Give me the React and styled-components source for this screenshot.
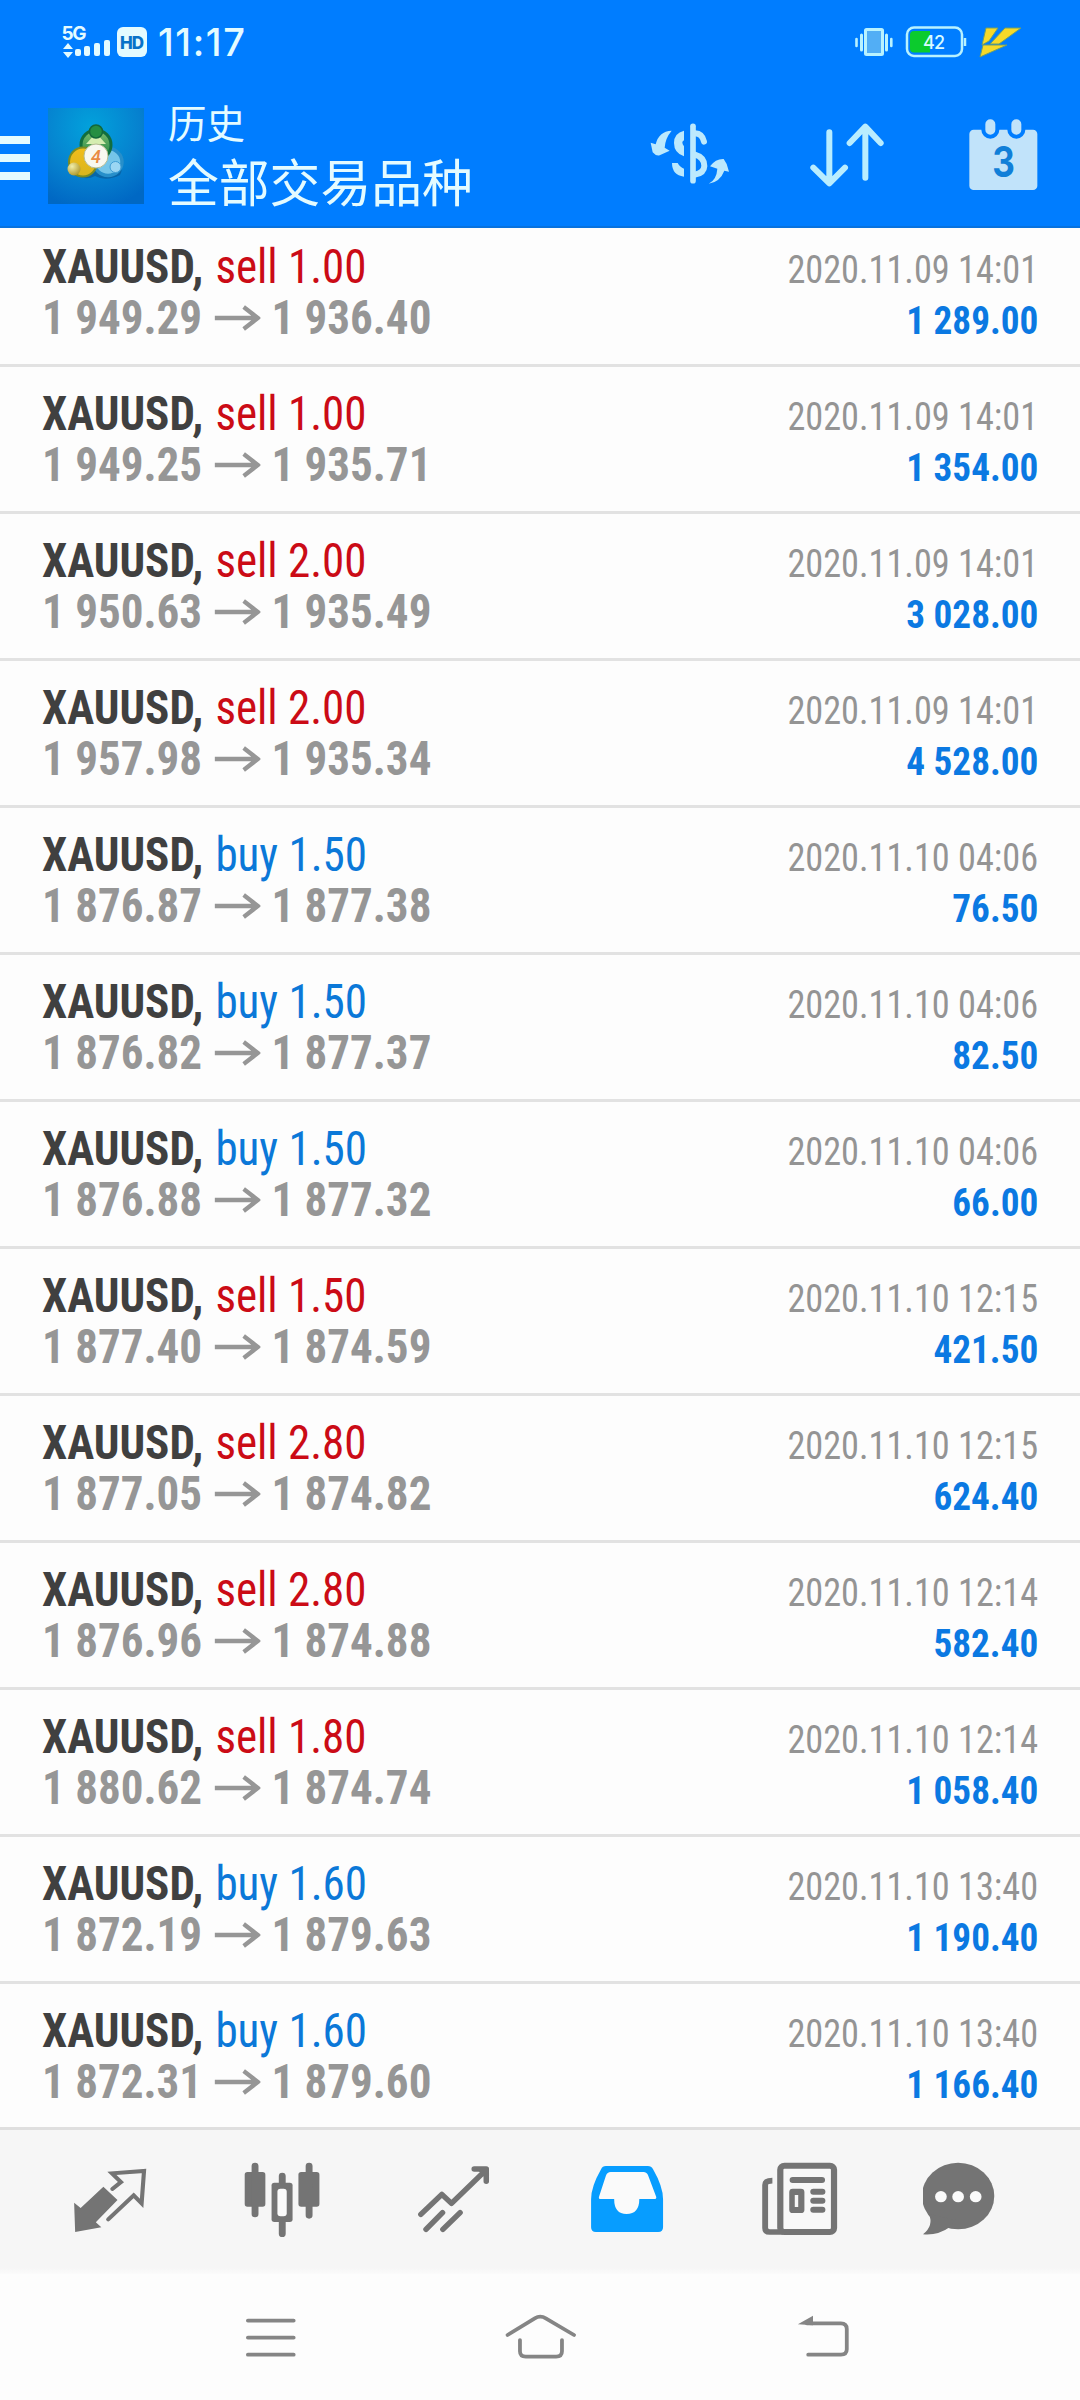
import React from 'react';
import styled, { createGlobalStyle } from 'styled-components';

const Global = createGlobalStyle`
  * { box-sizing: border-box; }
  body { margin: 0; background: #fdfdfd; }
`;

const condensed = '"Roboto Condensed", Roboto, "Liberation Sans", sans-serif';
const cjk = '"Noto Sans CJK SC", sans-serif';

const Screen = styled.div`
  width: 1080px;
  height: 2400px;
  display: flex;
  flex-direction: column;
  overflow: hidden;
  background: #fdfdfd;
`;

const Header = styled.header`
  height: 228px;
  flex: none;
  background: #007dff;
  border-bottom: 2px solid #0872de;
  color: #e4fbff;
`;

const StatusBar = styled.div`
  height: 84px;
  display: flex;
  align-items: center;
  justify-content: space-between;
  padding: 0 58px 0 60px;
`;

const StatusGroup = styled.div`
  display: flex;
  align-items: center;
`;

const Clock = styled.span`
  margin-left: 8px;
  font: 500 38px/86px Inter, sans-serif;
  letter-spacing: 1.6px;
`;

const AppBar = styled.div`
  height: 142px;
  display: flex;
  align-items: flex-start;
`;

const MenuButton = styled.div`
  width: 30px;
  margin: 52px 18px 0 0;
  display: flex;
  flex-direction: column;
  gap: 10px;
`;

const MenuLine = styled.span`
  height: 8px;
  background: #e4fbff;
`;

const Titles = styled.div`
  width: 480px;
  margin: 11px 0 0 24px;
  font-family: ${cjk};
  font-weight: 400;
`;

const Subtitle = styled.div`
  font-size: 38.5px;
  line-height: 52px;
`;

const Title = styled.div`
  font-size: 50.8px;
  line-height: 66px;
`;

const List = styled.main`
  height: 1899px;
  flex: none;
  overflow: hidden;
`;

const Rows = styled.div`
  margin-top: -8px;
`;

const Row = styled.div`
  height: 147px;
  display: flex;
  justify-content: space-between;
  padding: 21px 42px 0 42px;
  border-bottom: 3px solid #e2e2e2;
  font-family: ${condensed};
  white-space: nowrap;
`;

const Left = styled.div`
  display: flex;
  flex-direction: column;
  transform: scaleX(0.938);
  transform-origin: left;
`;

const Line = styled.div`
  height: 51px;
  line-height: 51px;
  font-size: 48px;
  display: flex;
  align-items: center;
`;

const Symbol = styled.b`
  color: #404040;
  margin-right: 13px;
`;

const Order = styled.span`
  color: ${(p) => (p.$side === 'sell' ? '#cb0b16' : '#0b78d8')};
`;

const Price = styled.b`
  color: #969696;
`;

const Right = styled.div`
  padding-top: 3px;
  display: flex;
  flex-direction: column;
  align-items: flex-end;
  font-size: 39.5px;
  line-height: 51px;
`;

const Time = styled.div`
  color: #949494;
  transform: scaleX(0.918);
  transform-origin: right;
`;

const Profit = styled.b`
  color: #0b79e2;
  transform: scaleX(0.942);
  transform-origin: right;
`;

const TabBar = styled.nav`
  height: 147px;
  flex: none;
  display: flex;
  padding: 20px 0 0 24px;
  background: linear-gradient(#f6f6f6 138px, #fdfdfd 146px);
  border-top: 3px solid #dfdfdf;
`;

const Tab = styled.div`
  width: 172.5px;
  display: flex;
  justify-content: center;
`;

const SystemBar = styled.div`
  height: 126px;
  flex: none;
  display: flex;
  align-items: center;
  padding: 0 135px;
`;

const SystemKey = styled.div`
  flex: 1;
  display: flex;
  justify-content: center;
`;

const trades = [
  ['sell', '1.00', '1 949.29', '1 936.40', '2020.11.09 14:01', '1 289.00'],
  ['sell', '1.00', '1 949.25', '1 935.71', '2020.11.09 14:01', '1 354.00'],
  ['sell', '2.00', '1 950.63', '1 935.49', '2020.11.09 14:01', '3 028.00'],
  ['sell', '2.00', '1 957.98', '1 935.34', '2020.11.09 14:01', '4 528.00'],
  ['buy', '1.50', '1 876.87', '1 877.38', '2020.11.10 04:06', '76.50'],
  ['buy', '1.50', '1 876.82', '1 877.37', '2020.11.10 04:06', '82.50'],
  ['buy', '1.50', '1 876.88', '1 877.32', '2020.11.10 04:06', '66.00'],
  ['sell', '1.50', '1 877.40', '1 874.59', '2020.11.10 12:15', '421.50'],
  ['sell', '2.80', '1 877.05', '1 874.82', '2020.11.10 12:15', '624.40'],
  ['sell', '2.80', '1 876.96', '1 874.88', '2020.11.10 12:14', '582.40'],
  ['sell', '1.80', '1 880.62', '1 874.74', '2020.11.10 12:14', '1 058.40'],
  ['buy', '1.60', '1 872.19', '1 879.63', '2020.11.10 13:40', '1 190.40'],
  ['buy', '1.60', '1 872.31', '1 879.60', '2020.11.10 13:40', '1 166.40'],
];

const ArrowSvg = styled.svg`
  margin: 0 12px 0 13px;
`;

const Arrow = () => (
  <ArrowSvg width="49" height="26" viewBox="0 0 49 26" fill="none" stroke="#969696" strokeWidth="4.6">
    <path d="M0 13H46M31 2L46 13L31 24" />
  </ArrowSvg>
);

const Signal = () => (
  <svg width="90" height="84" viewBox="60 0 90 84" fill="#e4fbff">
    <text x="61.5" y="39.5" fontFamily="Inter" fontWeight="700" fontSize="19" textLength="25">5G</text>
    <path d="M68 43l5 6h-10zM68 58l5-6h-10z" />
    <rect x="75" y="49" width="6" height="7" rx="2" />
    <rect x="84" y="46" width="6" height="10" rx="2" />
    <rect x="94" y="43" width="6" height="13" rx="2" />
    <rect x="104" y="40" width="6" height="16" rx="2" />
    <rect x="117" y="27" width="30" height="30" rx="6" />
    <text x="120" y="48.5" fontFamily="Inter" fontWeight="800" fontSize="17" textLength="24" fill="#0872c8">HD</text>
  </svg>
);

const Vibrate = () => (
  <svg width="40" height="30" viewBox="854 27 40 30" fill="none" stroke="#b8f2ff">
    <rect x="865.5" y="29.5" width="17" height="25" rx="1" strokeWidth="3" fill="#52aef5" />
    <path d="M861.5 35v15M886.5 35v15" strokeWidth="3" strokeLinecap="round" />
    <path d="M856.5 39v7M891.3 39v7" strokeWidth="2.6" strokeLinecap="round" />
  </svg>
);

const BatterySvg = styled.svg`
  margin: 0 12px 0 11px;
`;

const Battery = () => (
  <BatterySvg width="62" height="32" viewBox="905 26 62 32" fill="none">
    <rect x="907" y="27.5" width="55" height="28.5" rx="7" stroke="#b8f2ff" strokeWidth="2.5" />
    <path d="M914 31H930V52.5H914Q910 52.5 910 48.5V35Q910 31 914 31Z" fill="#0bcb2d" />
    <path d="M965 38v8" stroke="#b8f2ff" strokeWidth="2.5" />
    <text x="923" y="48.8" fontFamily="Inter" fontWeight="500" fontSize="18" textLength="22" fill="#d8fbff">42</text>
  </BatterySvg>
);

const Bolt = () => (
  <svg width="43" height="31" viewBox="978 26 43 31" fill="#f6d929" stroke="#6f9f6a" strokeWidth="1">
    <path d="M985 27H997L988 40L981 44ZM1004 27H1020L998 43H989Z M982 44H1006L979 56Z" />
  </svg>
);

const LogoSvg = styled.svg`
  margin-top: 24px;
`;

const Logo = () => (
  <LogoSvg width="96" height="96" viewBox="48 108 96 96">
    <defs>
      <radialGradient id="tile" cx=".45" cy=".2" r=".85">
        <stop offset="0" stopColor="#02a2dc" />
        <stop offset=".6" stopColor="#0681cf" />
        <stop offset="1" stopColor="#0068c4" />
      </radialGradient>
      <linearGradient id="green" x1="0" y1="0" x2="0" y2="1">
        <stop offset="0" stopColor="#7fbf70" />
        <stop offset="1" stopColor="#17803f" />
      </linearGradient>
      <linearGradient id="gold" x1="0" y1="0" x2="0" y2="1">
        <stop offset="0" stopColor="#f1bd1b" />
        <stop offset="1" stopColor="#d9b51e" />
      </linearGradient>
      <radialGradient id="bead" cx=".35" cy=".3" r=".75">
        <stop offset="0" stopColor="#f1eeaa" />
        <stop offset="1" stopColor="#b0982a" />
      </radialGradient>
    </defs>
    <rect x="48" y="108" width="96" height="96" fill="url(#tile)" />
    <path d="M80 150Q66 160 69 172Q84 182 95 176Q106 182 120 175Q126 163 115 152Z" fill="#0a5590" opacity=".6" />
    <ellipse cx="108" cy="162" rx="14" ry="13.5" fill="#75c5e9" stroke="#278fca" strokeWidth="3.5" />
    <circle cx="96" cy="145" r="15" fill="url(#green)" stroke="#126e3e" strokeWidth="3" />
    <ellipse cx="83" cy="162" rx="14" ry="14.5" fill="url(#gold)" stroke="#7b8c21" strokeWidth="2" />
    <path d="M96 133L86 144H106Z" fill="#d5edb0" />
    <circle cx="96" cy="131.5" r="6.5" fill="#258e42" stroke="#13673a" strokeWidth="1.5" />
    <circle cx="74" cy="169" r="6.5" fill="url(#bead)" />
    <circle cx="115.5" cy="167" r="5.5" fill="#9bd6f3" stroke="#3f9dd5" strokeWidth="1" />
    <circle cx="96" cy="156" r="12" fill="#f8f8f0" stroke="#b7bd94" strokeWidth="1" />
    <text x="96" y="162.5" textAnchor="middle" fontFamily="Roboto" fontStyle="italic" fontWeight="500" fontSize="18" fill="#e98b43">4</text>
  </LogoSvg>
);

const Actions = styled.div`
  display: flex;
  margin: 37px 0 0 2px;
  gap: 78px;
`;

const ExchangeIcon = () => (
  <svg width="80" height="74" viewBox="150 364 240 222" fill="#bce9fd">
    <path d="M215 393Q176 395 167 434L152 429L158 458Q168 470 179 467L209 453L194 444Q196 415 215 393Z" />
    <path d="M326 552Q350 540 352 507L330 500Q347 477 371 478L380 493L387 516L373 513Q360 547 326 552Z" />
    <path d="M252 393V422Q242 427 252 440V470Q222 460 222 430Q222 400 252 393ZM216 490H233Q240 503 252 507V531Q216 526 216 490Z" />
    <path d="M279 380V543" stroke="#bce9fd" strokeWidth="17" strokeLinecap="round" />
    <path d="M285 401Q307 402 312 426M285 465Q313 473 313 499Q312 520 285 525" fill="none" stroke="#bce9fd" strokeWidth="18" strokeLinecap="round" />
  </svg>
);

const SortIcon = () => (
  <svg width="80" height="74" viewBox="620 364 240 222" fill="none" stroke="#b9edff" strokeWidth="18" strokeLinecap="round" strokeLinejoin="round">
    <path d="M684 398V550M636 504L684 551L731 504M792 534V382M745 430L792 381L838 430" />
  </svg>
);

const CalendarIcon = () => (
  <svg width="76" height="74" viewBox="1094 364 228 222" overflow="visible" fill="#c1e3fa">
    <rect x="1104" y="390" width="204" height="181" rx="13" />
    <g stroke="#007dff" strokeWidth="12">
      <rect x="1146" y="353" width="42" height="58" rx="21" />
      <rect x="1224" y="353" width="42" height="58" rx="21" />
    </g>
    <text x="1173" y="532" textLength="68" lengthAdjust="spacingAndGlyphs" fontFamily="Inter" fontWeight="700" fontSize="126" fill="#117fd8">3</text>
  </svg>
);

/* Tab glyphs share a 100px box; `x` is the left edge of the drawing area. */
const TabIcon = ({ x, children }) => (
  <svg width="100" height="100" viewBox={`${x} 120 290.4 300`} preserveAspectRatio="none" fill="#747474" stroke="none">
    {children}
  </svg>
);

const tabs = [
  <TabIcon key="quotes" x={174}>
    <path d="M300 230L341 270L278 337L294 352L218 366L215 278L234 294Z" />
    <path d="M326 237L351 216L325 190L418 183L411 280L388 256L314 328" fill="none" stroke="#747474" strokeWidth="12" strokeLinecap="round" />
  </TabIcon>,
  <TabIcon key="chart" x={675}>
    <rect x="709" y="186" width="60" height="104" rx="8" />
    <rect x="865" y="186" width="61" height="104" rx="8" />
    <path d="M739 168V312M896 168V316M818 198V224M818 330V371" stroke="#747474" strokeWidth="20" strokeLinecap="round" />
    <rect x="787" y="218" width="61" height="118" rx="8" />
    <rect x="804" y="236" width="27" height="83" rx="9" fill="#fafafa" />
  </TabIcon>,
  <TabIcon key="trade" x={1176}>
    <path d="M1222 313L1283 253L1311 280L1410 181M1377 177H1412V214M1237 358L1285 308M1286 358L1336 308" fill="none" stroke="#747474" strokeWidth="16" strokeLinecap="round" strokeLinejoin="round" />
    <path d="M1382 175H1418V212Z" />
  </TabIcon>,
  <TabIcon key="history" x={109}>
    <path d="M190 168H312Q322 168 327 178Q356 230 356 268V352Q356 366 342 366H161Q147 366 147 352V268Q147 230 176 178Q180 168 190 168Z" fill="#079dff" />
    <path d="M204 186H299Q309 186 313 197L336 260Q338 267 330 267H287Q287 312 250 312Q214 312 214 267H175Q168 267 170 260L190 197Q194 186 204 186Z" fill="#fafafa" />
  </TabIcon>,
  <TabIcon key="news" x={611}>
    <path d="M709 366H668Q655 366 655 354V225Q655 212 676 212" fill="none" stroke="#747474" strokeWidth="17" />
    <rect x="699" y="167" width="156" height="199" rx="12" fill="#f8f8f8" stroke="#747474" strokeWidth="18" />
    <path d="M735 210H820M795 245H821M795 272H821M795 299H821" stroke="#747474" strokeWidth="18" strokeLinecap="round" />
    <rect x="725" y="236" width="44" height="73" rx="10" />
    <rect x="741" y="255" width="10" height="36" fill="#f6f6f6" />
  </TabIcon>,
  <TabIcon key="messages" x={1111}>
    <ellipse cx="1213" cy="258" rx="105" ry="100" />
    <path d="M1128 312Q1143 347 1111 373Q1155 377 1188 352L1205 330Z" />
    <g fill="#fafafa">
      <circle cx="1163" cy="260" r="17" />
      <circle cx="1213" cy="260" r="17" />
      <circle cx="1264" cy="260" r="17" />
    </g>
  </TabIcon>,
];

const KeyIcon = ({ x, children }) => (
  <svg width="100" height="66.7" viewBox={`${x} 580 290.4 200`} preserveAspectRatio="none" fill="none" stroke="#858585" strokeWidth="11" strokeLinecap="round">
    {children}
  </svg>
);

export default function App() {
  return (
    <Screen>
      <Global />
      <Header>
        <StatusBar>
          <StatusGroup>
            <Signal />
            <Clock>11:17</Clock>
          </StatusGroup>
          <StatusGroup>
            <Vibrate />
            <Battery />
            <Bolt />
          </StatusGroup>
        </StatusBar>
        <AppBar>
          <MenuButton>
            <MenuLine />
            <MenuLine />
            <MenuLine />
          </MenuButton>
          <Logo />
          <Titles>
            <Subtitle>历史</Subtitle>
            <Title>全部交易品种</Title>
          </Titles>
          <Actions>
            <ExchangeIcon />
            <SortIcon />
            <CalendarIcon />
          </Actions>
        </AppBar>
      </Header>
      <List>
        <Rows>
          {trades.map(([side, lots, open, close, time, profit], i) => (
            <Row key={i}>
              <Left>
                <Line>
                  <Symbol>XAUUSD,</Symbol>
                  <Order $side={side}>{side} {lots}</Order>
                </Line>
                <Line>
                  <Price>{open}</Price>
                  <Arrow />
                  <Price>{close}</Price>
                </Line>
              </Left>
              <Right>
                <Time>{time}</Time>
                <Profit>{profit}</Profit>
              </Right>
            </Row>
          ))}
        </Rows>
      </List>
      <TabBar>
        {tabs.map((icon) => (
          <Tab key={icon.key}>{icon}</Tab>
        ))}
      </TabBar>
      <SystemBar>
        <SystemKey>
          <KeyIcon x={639}>
            <path d="M720 630H853M720 681H853M720 732H853" />
          </KeyIcon>
        </SystemKey>
        <SystemKey>
          <KeyIcon x={1423}>
            <path d="M1474 673L1553 623Q1569 613 1585 623L1667 673M1510 688V722Q1510 738 1527 738H1615Q1632 738 1632 722V688" />
          </KeyIcon>
        </SystemKey>
        <SystemKey>
          <KeyIcon x={639}>
            <path d="M779 732H874Q891 732 891 716V655Q891 638 874 638H775" />
            <path d="M749 641L793 615V644Z" fill="#858585" stroke="none" />
          </KeyIcon>
        </SystemKey>
      </SystemBar>
    </Screen>
  );
}
